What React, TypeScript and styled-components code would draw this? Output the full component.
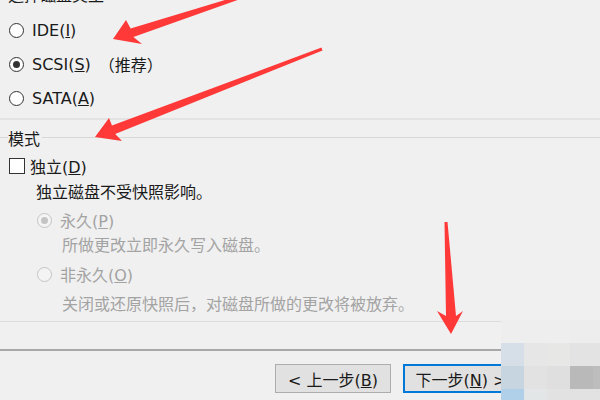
import styled, { createGlobalStyle } from 'styled-components'

const GlobalStyle = createGlobalStyle`
  html, body {
    margin: 0;
    padding: 0;
    background: #f0f0f0;
  }
  body {
    width: 600px;
    height: 400px;
    overflow: hidden;
    font-family: "DejaVu Sans", "Noto Sans CJK SC", sans-serif;
    font-size: 16px;
    color: #1a1a1a;
  }
`

const Dialog = styled.div`
  position: relative;
  width: 600px;
  height: 400px;
  overflow: hidden;
  background: #f0f0f0;
`

const TypeGroup = styled.div`
  padding-left: 8px;
  margin-top: -14px;
  padding-bottom: 3px;
  border-bottom: 2px solid #e3e3e3;
`

const Heading = styled.div`
  height: 20px;
  line-height: 20px;
  margin-bottom: 7px;
`

const Row = styled.div<{ $indent?: number; $top?: number; $h?: number; $muted?: boolean }>`
  display: flex;
  align-items: center;
  gap: 8px;
  height: ${p => p.$h ?? 24}px;
  margin-top: ${p => p.$top ?? 0}px;
  padding-left: ${p => p.$indent ?? 0}px;
  color: ${p => (p.$muted ? '#a3a3a3' : '#1a1a1a')};
  white-space: nowrap;
`

const Radio = styled.span<{ $checked?: boolean; $disabled?: boolean }>`
  position: relative;
  width: 13px;
  height: 13px;
  border-radius: 50%;
  border: 1px solid ${p => (p.$disabled ? '#c4c4c4' : '#333')};
  background: ${p => (p.$disabled ? '#f4f4f4' : '#fff')};
  flex-shrink: 0;

  &::after {
    content: '';
    display: ${p => (p.$checked ? 'block' : 'none')};
    position: absolute;
    left: 3px;
    top: 3px;
    width: 7px;
    height: 7px;
    border-radius: 50%;
    background: ${p => (p.$disabled ? '#c4c4c4' : '#333')};
  }
`

const Box = styled.span`
  width: 14px;
  height: 14px;
  border: 1px solid #333;
  background: #fff;
  flex-shrink: 0;
`

const Note = styled.span`
  margin-left: 0;
`

const ModeGroup = styled.div`
  padding-top: 8px;
  padding-bottom: 6px;
  border-bottom: 1px solid #dcdcdc;
`

const GroupTitle = styled.div`
  display: flex;
  align-items: center;
  height: 20px;

  &::before,
  &::after {
    content: '';
    height: 1px;
    background: #d8d8d8;
    margin-top: -2px;
  }
  &::before {
    width: 8px;
  }
  &::after {
    flex: 1;
    margin-left: 2px;
  }
`

const CheckRow = styled(Row)`
  padding-left: 9px;
  gap: 5px;
`

const Footer = styled.div`
  margin-top: 27px;
  border-top: 2px solid #a8a8a8;
  display: flex;
  justify-content: flex-end;
  gap: 12px;
  padding: 13px 81px 0 0;
`

const Button = styled.button<{ $primary?: boolean }>`
  width: 116px;
  height: 29px;
  box-sizing: border-box;
  font-family: inherit;
  font-size: 16px;
  color: #1a1a1a;
  background: #e1e1e1;
  border: ${p => (p.$primary ? '2px solid #0078d7' : '1px solid #adadad')};
  padding: 0;
  white-space: nowrap;
`

const Mosaic = styled.div`
  position: absolute;
  left: 501px;
  top: 320px;
  display: grid;
  grid-template-columns: repeat(5, 23px);
  grid-auto-rows: 23px;
`

const Cell = styled.div<{ $c: string }>`
  background: ${p => p.$c};
`

const Overlay = styled.svg`
  position: absolute;
  left: 0;
  top: 0;
  pointer-events: none;
`

const mosaic = [
  '#eeeeee', '#eeeeee', '#eeeeee', '#ededed', '#ededed',
  '#d6dfe7', '#e6e6e6', '#e7e7e6', '#e3e3e3', '#e3e3e3',
  '#c6d5e0', '#e2e2e2', '#dfdfdf', '#b9b9b9', '#bdbdbd',
  '#b0d0ea', '#e3e6e6', '#e2e2e2', '#e2e2e2', '#e2e2e2',
]

export default function App() {
  return (
    <Dialog>
      <GlobalStyle />
      <TypeGroup>
        <Heading>选择磁盘类型</Heading>
        <Row $h={34} $indent={1}>
          <Radio />
          <span>IDE(<u>I</u>)</span>
        </Row>
        <Row $h={34} $indent={1}>
          <Radio $checked />
          <span>SCSI(<u>S</u>)</span>
          <Note>（推荐）</Note>
        </Row>
        <Row $h={34} $indent={1}>
          <Radio />
          <span>SATA(<u>A</u>)</span>
        </Row>
      </TypeGroup>

      <ModeGroup>
        <GroupTitle>模式</GroupTitle>
        <CheckRow $top={6}>
          <Box />
          <span>独立(<u>D</u>)</span>
        </CheckRow>
        <Row $top={1} $indent={36}>独立磁盘不受快照影响。</Row>
        <Row $top={5} $indent={37} $muted>
          <Radio $checked $disabled />
          <span>永久(<u>P</u>)</span>
        </Row>
        <Row $indent={62} $muted>所做更改立即永久写入磁盘。</Row>
        <Row $top={6} $indent={37} $muted>
          <Radio $disabled />
          <span>非永久(<u>O</u>)</span>
        </Row>
        <Row $top={5} $indent={62} $muted>关闭或还原快照后，对磁盘所做的更改将被放弃。</Row>
      </ModeGroup>

      <Footer>
        <Button>&lt; 上一步(<u>B</u>)</Button>
        <Button $primary>下一步(<u>N</u>) &gt;</Button>
      </Footer>

      <Mosaic>
        {mosaic.map((c, i) => (
          <Cell key={i} $c={c} />
        ))}
      </Mosaic>

      <Overlay width={600} height={400} viewBox="0 0 600 400">
        <g fill="#ff3838">
          <polygon points="113,39 126,20 130.6,28.5 249.5,-7.4 250.5,-4.6 133.4,37.1 142,44" />
          <polygon points="95,137 109,118 112,125.6 321.5,47.6 322.5,50.4 115.2,134 122,141" />
          <polygon points="451,334 437,311 446,316 444.5,222 447.5,222 456,316 463,311" />
        </g>
      </Overlay>
    </Dialog>
  )
}
